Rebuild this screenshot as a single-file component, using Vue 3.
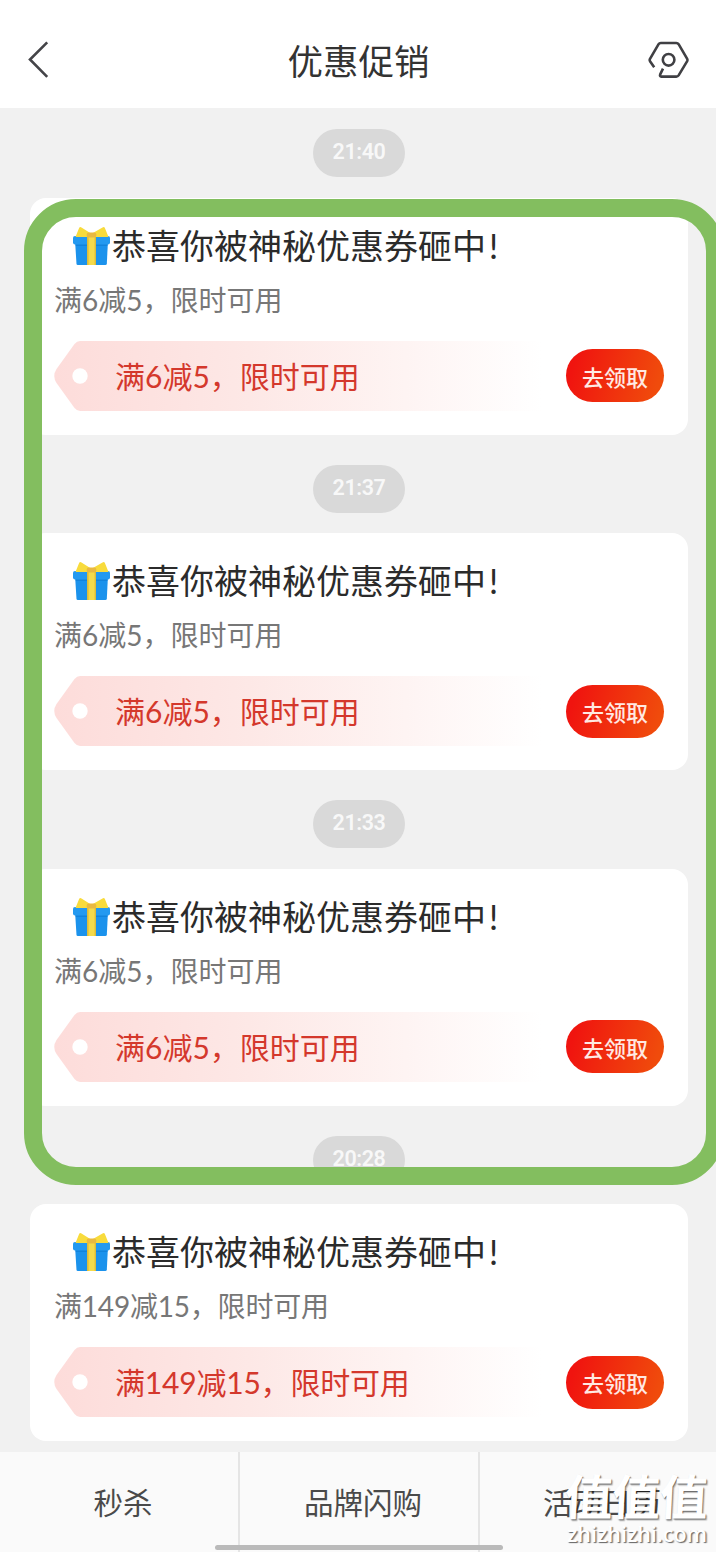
<script setup>
const messages = [
  { time: '21:40', text: '满6减5，限时可用' },
  { time: '21:37', text: '满6减5，限时可用' },
  { time: '21:33', text: '满6减5，限时可用' },
  { time: '20:28', text: '满149减15，限时可用', wide: true },
]
const tabs = ['秒杀', '品牌闪购', '活动日历']
</script>

<template>
  <div class="page">
    <header class="header">
      <svg class="back" width="24" height="40" viewBox="0 0 24 40" fill="none" stroke="#444448" stroke-width="2.6">
        <path d="M20.2 2.3 L3 19.5 L20.2 36.8" />
      </svg>
      <h1>优惠促销</h1>
      <svg class="settings" width="44" height="40" viewBox="0 0 44 40" fill="none" stroke="#404044" stroke-width="2.6" stroke-linejoin="round">
        <path d="M8.2 27.3 L4 21.2 Q3.2 20 4 18.8 L12.6 4.2 Q13.3 3 14.8 3 H30.3 Q31.8 3 32.6 4.2 L41.2 18.8 Q41.8 20 41.2 21.2 L32.6 35.4 Q31.8 36.6 30.3 36.6 H15.4 Q13.4 36.4 14.2 34.4 L17 28.6" />
        <circle cx="22.6" cy="19.8" r="5.8" />
      </svg>
    </header>

    <main class="feed">
      <section v-for="m in messages" :key="m.time" class="message">
        <div class="time"><span>{{ m.time }}</span></div>
        <article class="card" :class="{ wide: m.wide }">
          <h2>
            <svg class="gift" width="40" height="40" viewBox="0 0 40 40">
              <path d="M4 14 H37 L35.8 38 Q35.6 39 34.3 39 H6.8 Q5.6 39 5.5 38 Z" fill="#1b92ec" />
              <path d="M4.6 17 H36.4 V20 H4.8 Z" fill="#1283dc" />
              <rect x="2" y="10" width="37" height="8.5" rx="2" fill="#2399f0" />
              <path d="M16 10 H25 V39 H16 Z" fill="#f5da4a" />
              <path d="M16 11 H17.6 V39 H16 Z M23.6 11 H25 V39 H23.6 Z" fill="#dfbd38" />
              <path d="M19 11 H4.5 L8.2 1.8 Q9 .4 10.5 1.4 L20 7.4 Z" fill="#f8db3c" />
              <path d="M22 11 H37.5 L33.8 1.8 Q33 .4 31.5 1.4 L21 7.4 Z" fill="#f8db3c" />
              <rect x="15.7" y="6.6" width="9.6" height="5" rx="2" fill="#e9b941" />
            </svg>
            <span>恭喜你被神秘优惠券砸中</span><span class="bang">!</span>
          </h2>
          <p class="desc">{{ m.text }}</p>
          <div class="offer">
            <div class="coupon">
              <svg class="ticket" width="488" height="70" viewBox="0 0 488 70">
                <defs>
                  <linearGradient :id="'fade' + m.time.replace(':', '')">
                    <stop offset="0" stop-color="#fddcda" />
                    <stop offset=".4" stop-color="#fde8e6" />
                    <stop offset=".72" stop-color="#fef4f3" />
                    <stop offset="1" stop-color="#fff" />
                  </linearGradient>
                </defs>
                <path d="M26 0 H488 V70 H26 Q23 70 20.5 67 L2.5 42 Q-2 35 2.5 28 L20.5 3 Q23 0 26 0 Z" :fill="'url(#fade' + m.time.replace(':', '') + ')'" />
                <circle cx="26" cy="35" r="7.7" fill="#fff" />
              </svg>
              <span class="label">{{ m.text }}</span>
            </div>
            <button>去领取</button>
          </div>
        </article>
      </section>
    </main>

    <nav class="tabs">
      <div v-for="t in tabs" :key="t" class="tab">{{ t }}</div>
    </nav>

    <div class="highlight"></div>
    <div class="home-bar"></div>
    <div class="watermark">
      <div class="mark">值值值</div>
      <div class="site">zhizhizhi.com</div>
    </div>
  </div>
</template>

<style>
body { margin: 0; background: #f1f1f1; }
</style>

<style scoped>
.page {
  position: relative;
  width: 716px;
  height: 1552px;
  overflow: hidden;
  display: flex;
  flex-direction: column;
  background: #f1f1f1;
  font-family: Lato, "Noto Sans CJK SC", sans-serif;
}
h1, h2, p { margin: 0; font-weight: 400; }
.header {
  box-sizing: border-box;
  height: 108px;
  flex: none;
  display: flex;
  align-items: center;
  justify-content: space-between;
  padding: 11px 26px 0 27px;
  background: #fff;
}
.back { margin-right: 20px; }
h1 {
  font-size: 35.5px;
  line-height: 40px;
  color: #333;
  padding-top: 4px;
}
.feed {
  flex: none;
  height: 1344px;
  box-sizing: border-box;
  padding: 21px 28px 0 30px;
  display: flex;
  flex-direction: column;
  gap: 30px;
}
.message {
  display: flex;
  flex-direction: column;
  align-items: center;
  gap: 20.5px;
}
.time {
  box-sizing: border-box;
  width: 92px;
  height: 48px;
  border-radius: 24px;
  background: #d9d9d9;
  color: #f8f8f8;
  font: 600 21.5px/45px Roboto, sans-serif;
  letter-spacing: -.4px;
  text-align: center;
}
.card {
  box-sizing: border-box;
  width: 658px;
  height: 237px;
  padding: 28px 24px 0;
  border-radius: 16px;
  background: #fff;
}
.wide { letter-spacing: -.2px; }
h2 {
  display: flex;
  align-items: center;
  height: 40px;
  padding-left: 17px;
  font-size: 34px;
  line-height: 40px;
  letter-spacing: 0;
  color: #2b2b2b;
}
.gift { margin-right: 1px; }
.bang { margin-left: 3px; }
.desc {
  margin-top: 16px;
  height: 36px;
  font-size: 28px;
  line-height: 36px;
  color: #777;
}
.offer {
  display: flex;
  align-items: center;
  justify-content: space-between;
  margin-top: 23px;
}
.coupon {
  display: grid;
  align-items: center;
  width: 488px;
  height: 70px;
}
.coupon > * { grid-area: 1 / 1; }
.label {
  padding-left: 61px;
  font-size: 30px;
  line-height: 70px;
  color: #d4382c;
}
button {
  width: 98px;
  height: 53px;
  padding: 0;
  border: 0;
  border-radius: 27px;
  background: linear-gradient(105deg, #f0140f 10%, #f04b0c 90%);
  color: #ffe9e3;
  font: 500 22px/50px "Noto Sans CJK SC", sans-serif;
}
.tabs {
  flex: none;
  display: grid;
  grid-template-columns: 240px 240px 1fr;
  height: 100px;
  background: #fafafa;
}
.tab {
  box-sizing: border-box;
  border-right: 2px solid #e5e5e5;
  padding-left: 8px;
  font-size: 29.5px;
  line-height: 101px;
  text-align: center;
  color: #4a4a4a;
}
.tab:last-child { border: 0; }
.highlight {
  position: absolute;
  box-sizing: border-box;
  left: 24px;
  top: 199px;
  width: 700px;
  height: 986px;
  border: 18px solid #83be5f;
  border-radius: 52px;
}
.home-bar {
  position: absolute;
  left: 215px;
  top: 1545px;
  width: 288px;
  height: 5px;
  border-radius: 3px;
  background: #bababa;
}
.watermark {
  position: absolute;
  left: 565px;
  top: 1467px;
  color: #fff;
  white-space: nowrap;
}
.mark {
  font: 700 48px/54px "Noto Sans CJK SC", sans-serif;
  letter-spacing: -.5px;
  transform: skewX(-3deg);
  text-shadow: 1px 1px 1px rgba(0, 0, 0, .5), 2px 2px 1px rgba(0, 0, 0, .2);
}
.site {
  padding-left: 2px;
  font: 600 21.5px/26px "Open Sans", sans-serif;
  text-shadow: 1px 1px 1px rgba(0, 0, 0, .5), 2px 1px 1px rgba(0, 0, 0, .2);
}
</style>
